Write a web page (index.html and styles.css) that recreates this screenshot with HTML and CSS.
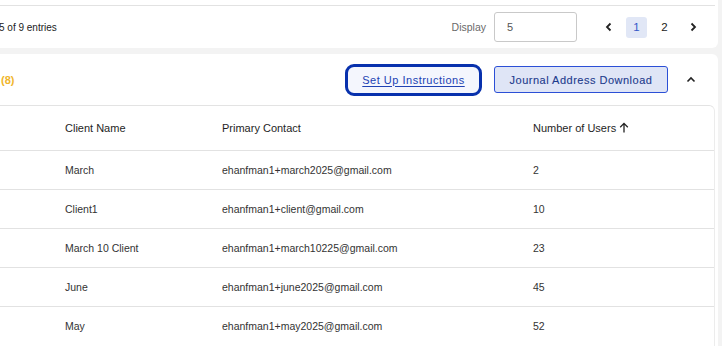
FILE: index.html
```html
<!DOCTYPE html>
<html>
<head>
<meta charset="utf-8">
<link rel="stylesheet" href="styles.css">
</head>
<body>
<div class="page">
  <section class="card card-top">
    <div class="table-end"></div>
    <div class="footer">
      <span class="entries">5 of 9 entries</span>
      <div class="footer-right">
        <span class="display-label">Display</span>
        <div class="display-input">5</div>
        <div class="pager">
          <span class="pg-arrow"><svg width="8" height="10" viewBox="0 0 8 10"><path d="M5.5 1.5 L2 5 L5.5 8.5" fill="none" stroke="#222" stroke-width="1.8"/></svg></span>
          <span class="pg-num active">1</span>
          <span class="pg-num">2</span>
          <span class="pg-arrow"><svg width="8" height="10" viewBox="0 0 8 10"><path d="M2.5 1.5 L6 5 L2.5 8.5" fill="none" stroke="#222" stroke-width="1.8"/></svg></span>
        </div>
      </div>
    </div>
  </section>

  <section class="card card-main">
    <div class="head">
      <span class="count">(8)</span>
      <div class="actions">
        <a class="btn-setup" href="#">Set Up Instructions</a>
        <button class="btn-journal">Journal Address Download</button>
        <span class="collapse"><svg width="10" height="7" viewBox="0 0 10 7"><path d="M1.5 5.5 L5 2 L8.5 5.5" fill="none" stroke="#222" stroke-width="1.6"/></svg></span>
      </div>
    </div>
    <div class="table">
      <div class="row row-head">
        <span>Client Name</span>
        <span>Primary Contact</span>
        <span class="sort">Number of Users <svg width="10" height="11" viewBox="0 0 10 11"><path d="M5 10.5 V1.5 M1.2 5.2 L5 1.4 L8.8 5.2" fill="none" stroke="#222" stroke-width="1.3"/></svg></span>
      </div>
      <div class="row"><span>March</span><span>ehanfman1+march2025@gmail.com</span><span>2</span></div>
      <div class="row"><span>Client1</span><span>ehanfman1+client@gmail.com</span><span>10</span></div>
      <div class="row"><span>March 10 Client</span><span>ehanfman1+march10225@gmail.com</span><span>23</span></div>
      <div class="row"><span>June</span><span>ehanfman1+june2025@gmail.com</span><span>45</span></div>
      <div class="row last"><span>May</span><span>ehanfman1+may2025@gmail.com</span><span>52</span></div>
    </div>
  </section>
</div>
</body>
</html>
```

FILE: styles.css
```css
* { box-sizing: border-box; }
html, body {
  margin: 0;
  padding: 0;
  background: #f3f3f3;
  font-family: "Liberation Sans", Arial, sans-serif;
  color: #333;
  overflow: hidden;
}
.page {
  width: 718px;
  display: flex;
  flex-direction: column;
  gap: 6px;
}
.card {
  background: #fff;
  padding-right: 3px;
}
.card-top {
  height: 48px;
  border-bottom-right-radius: 6px;
}
.table-end {
  height: 6px;
  border-bottom: 1px solid #e2e2e2;
}
.footer {
  height: 42px;
  display: flex;
  align-items: center;
  justify-content: space-between;
}
.entries {
  font-size: 10px;
  color: #222;
  margin-left: -1px;
}
.footer-right {
  display: flex;
  align-items: center;
}
.display-label {
  font-size: 10.5px;
  color: #6a6a6a;
  margin-right: 8px;
}
.display-input {
  width: 83px;
  height: 30px;
  border: 1px solid #c9c9c9;
  border-radius: 3px;
  font-size: 11px;
  color: #555;
  padding-left: 12px;
  display: flex;
  align-items: center;
}
.pager {
  display: flex;
  align-items: center;
  margin-left: 21px;
  margin-right: 12px;
  gap: 7px;
}
.pg-arrow {
  width: 21px;
  display: flex;
  justify-content: center;
}
.pg-num {
  width: 21px;
  height: 21px;
  border-radius: 3px;
  font-size: 11.5px;
  color: #222;
  display: flex;
  align-items: center;
  justify-content: center;
}
.pg-num.active {
  background: #e1e7f6;
  color: #3458c8;
}
.card-main {
  border-top-right-radius: 6px;
  height: 300px;
}
.head {
  height: 51px;
  display: flex;
  align-items: center;
  justify-content: space-between;
}
.count {
  color: #f0b52c;
  font-weight: bold;
  font-size: 11px;
  margin-left: 1px;
}
.actions {
  display: flex;
  align-items: center;
}
.btn-setup {
  width: 137px;
  height: 32px;
  border: 3px solid #0831ad;
  border-radius: 9px;
  background: #f4f6fd;
  color: #2142b3;
  font-size: 11px;
  letter-spacing: 0.5px;
  text-decoration: underline;
  text-underline-offset: 2px;
  display: flex;
  align-items: center;
  justify-content: center;
}
.btn-journal {
  margin-left: 12px;
  width: 174px;
  height: 27px;
  border: 1px solid #2b4fd6;
  border-radius: 3px;
  background: #dfe5f6;
  color: #1d3a8c;
  font-family: "Liberation Sans", Arial, sans-serif;
  font-size: 11px;
  letter-spacing: 0.5px;
  padding: 0;
  -webkit-text-stroke: 0.1px #1d3a8c;
}
.collapse {
  width: 24px;
  margin-left: 11px;
  margin-right: 12px;
  display: flex;
  justify-content: center;
}
.table {
  border-top: 1px solid #e3e3e3;
  border-right: 1px solid #ececec;
  border-top-right-radius: 6px;
  height: 249px;
}
.row {
  display: grid;
  grid-template-columns: 157px 311px 1fr;
  padding-left: 65px;
  height: 39px;
  align-items: center;
  border-bottom: 1px solid #e2e2e2;
  font-size: 10.5px;
  color: #333;
  padding-bottom: 1px;
}
.row.last { border-bottom: none; }
.row-head {
  height: 45px;
  font-size: 11px;
  color: #1e1e1e;
}
.sort {
  display: flex;
  align-items: center;
  gap: 3px;
}
```
